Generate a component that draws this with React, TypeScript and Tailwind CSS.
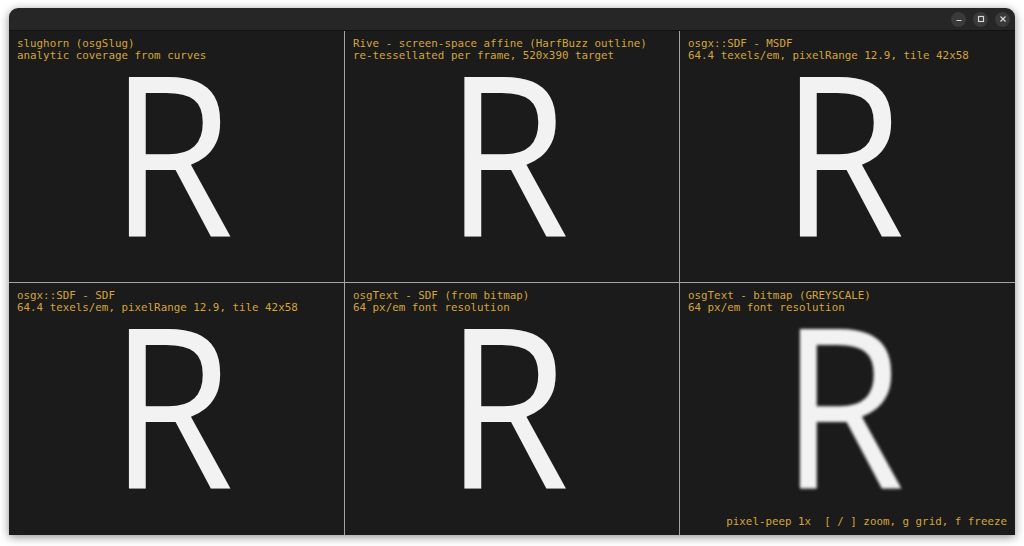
import React from 'react';

type Panel = {
  title: string;
  sub: string;
  blur?: boolean;
  footer?: string;
};

const panels: Panel[] = [
  { title: 'slughorn (osgSlug)', sub: 'analytic coverage from curves' },
  { title: 'Rive - screen-space affine (HarfBuzz outline)', sub: 're-tessellated per frame, 520x390 target' },
  { title: 'osgx::SDF - MSDF', sub: '64.4 texels/em, pixelRange 12.9, tile 42x58' },
  { title: 'osgx::SDF - SDF', sub: '64.4 texels/em, pixelRange 12.9, tile 42x58' },
  { title: 'osgText - SDF (from bitmap)', sub: '64 px/em font resolution' },
  {
    title: 'osgText - bitmap (GREYSCALE)',
    sub: '64 px/em font resolution',
    blur: true,
    footer: 'pixel-peep 1x\u00a0\u00a0[ / ] zoom, g grid, f freeze',
  },
];

const mono = "font-['DejaVu_Sans_Mono',monospace]";

const TitleButton: React.FC<{ kind: 'min' | 'max' | 'close' }> = ({ kind }) => (
  <div className="w-[15px] h-[15px] rounded-full bg-[#3a3a3a] flex items-center justify-center">
    <svg width="8" height="8" viewBox="0 0 8 8" fill="none" stroke="#d6d6d6" strokeWidth="1.2">
      {kind === 'min' && <line x1="1.5" y1="5.5" x2="6.5" y2="5.5" />}
      {kind === 'max' && <rect x="1.5" y="1.5" width="5" height="5" />}
      {kind === 'close' && (
        <>
          <line x1="1.5" y1="1.5" x2="6.5" y2="6.5" />
          <line x1="6.5" y1="1.5" x2="1.5" y2="6.5" />
        </>
      )}
    </svg>
  </div>
);

const Cell: React.FC<{ panel: Panel }> = ({ panel }) => (
  <div className="bg-[#1b1b1b] flex flex-col overflow-hidden">
    {/* label */}
    <div className={`${mono} text-[10.85px] leading-[12px] text-[#d4a53a] pt-[7px] px-[8px] whitespace-pre`}>
      <div>{panel.title}</div>
      <div>{panel.sub}</div>
    </div>

    {/* glyph */}
    <div
      className={`mt-[9px] pr-[11px] text-center text-[224px] leading-[160px] text-[#f2f2f2] font-['Open_Sans',sans-serif] scale-x-[0.9] ${
        panel.blur ? 'blur-[1.6px]' : ''
      }`}
    >
      R
    </div>

    {panel.footer && (
      <div className={`${mono} mt-auto text-right text-[10.85px] leading-[12px] text-[#d4a53a] pr-[8px] pb-[7px] whitespace-pre`}>
        {panel.footer}
      </div>
    )}
  </div>
);

const App: React.FC = () => {
  return (
    <div className="w-[1024px] h-[546px] bg-white pt-[8px] pl-[9px]">
      <div className="w-[1006px] h-[527px] flex flex-col rounded-t-[9px] overflow-hidden shadow-[0_2px_10px_rgba(0,0,0,0.45)]">
        {/* Title bar */}
        <div className="h-[23px] bg-[#262626] flex items-center justify-end gap-[7px] pr-[5px] border-b border-[#111]">
          <TitleButton kind="min" />
          <TitleButton kind="max" />
          <TitleButton kind="close" />
        </div>

        {/* Panel grid */}
        <div className="flex-1 grid grid-cols-[335px_334px_1fr] grid-rows-[251px_1fr] gap-[1px] bg-[#a3a3a3]">
          {panels.map((p, i) => (
            <Cell key={i} panel={p} />
          ))}
        </div>
      </div>
    </div>
  );
};

export default App;
